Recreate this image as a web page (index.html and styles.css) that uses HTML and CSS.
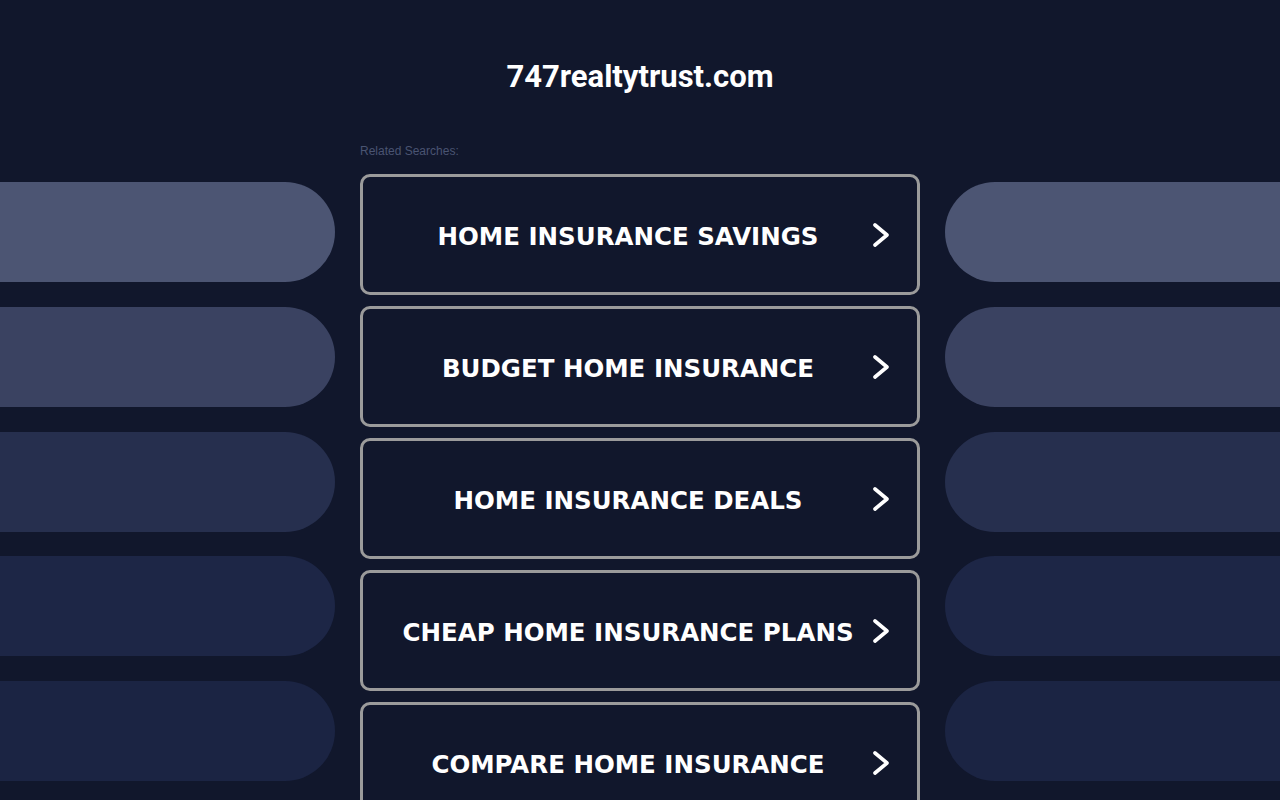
FILE: index.html
```html
<!DOCTYPE html>
<html lang="en">
<head>
<meta charset="utf-8">
<title>747realtytrust.com</title>
<link rel="stylesheet" href="styles.css">
</head>
<body>
  <header class="header">
    <h1 class="domain">747realtytrust.com</h1>
  </header>
  <main class="layout">
    <div class="side side-left">
      <div class="pill pill-1"></div>
      <div class="pill pill-2"></div>
      <div class="pill pill-3"></div>
      <div class="pill pill-4"></div>
      <div class="pill pill-5"></div>
    </div>
    <div class="center">
      <div class="related">Related Searches:</div>
      <ul class="links">
        <li><a class="link" href="#"><span class="link-text">HOME INSURANCE SAVINGS</span><svg class="chev" viewBox="0 0 24 24"><path d="M6 2 L18 12 L6 22"/></svg></a></li>
        <li><a class="link" href="#"><span class="link-text">BUDGET HOME INSURANCE</span><svg class="chev" viewBox="0 0 24 24"><path d="M6 2 L18 12 L6 22"/></svg></a></li>
        <li><a class="link" href="#"><span class="link-text">HOME INSURANCE DEALS</span><svg class="chev" viewBox="0 0 24 24"><path d="M6 2 L18 12 L6 22"/></svg></a></li>
        <li><a class="link" href="#"><span class="link-text">CHEAP HOME INSURANCE PLANS</span><svg class="chev" viewBox="0 0 24 24"><path d="M6 2 L18 12 L6 22"/></svg></a></li>
        <li><a class="link" href="#"><span class="link-text">COMPARE HOME INSURANCE</span><svg class="chev" viewBox="0 0 24 24"><path d="M6 2 L18 12 L6 22"/></svg></a></li>
      </ul>
    </div>
    <div class="side side-right">
      <div class="pill pill-1"></div>
      <div class="pill pill-2"></div>
      <div class="pill pill-3"></div>
      <div class="pill pill-4"></div>
      <div class="pill pill-5"></div>
    </div>
  </main>
</body>
</html>
```

FILE: styles.css
```css
html, body {
  margin: 0;
  padding: 0;
  background: #11172c;
  height: 100%;
  overflow: hidden;
}

body {
  font-family: "Liberation Sans", Arial, sans-serif;
  color: #ffffff;
}

.header {
  height: 140px;
  display: flex;
  justify-content: center;
}

.domain {
  margin: 58px 0 0;
  font-family: Roboto, "Liberation Sans", sans-serif;
  font-weight: 700;
  font-size: 31px;
  line-height: 38px;
  color: #ffffff;
}

.layout {
  display: grid;
  grid-template-columns: 1fr 560px 1fr;
  column-gap: 25px;
}

.side {
  display: flex;
  flex-direction: column;
  gap: 24.75px;
  padding-top: 42px;
}

.pill {
  height: 100px;
  background: #4c5573;
}

.side-left .pill {
  border-radius: 0 50px 50px 0;
}

.side-right .pill {
  border-radius: 50px 0 0 50px;
}

.pill-1 { background: #4c5573; }
.pill-2 { background: #3a4261; }
.pill-3 { background: #262f4e; }
.pill-4 { background: #1d2646; }
.pill-5 { background: #1b2443; }

.center {
  display: flex;
  flex-direction: column;
}

.related {
  font-size: 12px;
  line-height: 20px;
  color: #4a5472;
  height: 34px;
  padding-top: 1px;
  box-sizing: border-box;
}

.links {
  list-style: none;
  margin: 0;
  padding: 0;
  display: flex;
  flex-direction: column;
  gap: 11px;
}

.link {
  display: flex;
  align-items: center;
  height: 121px;
  box-sizing: border-box;
  border: 3px solid #9b9b9b;
  border-radius: 10px;
  background: #11172c;
  text-decoration: none;
  color: #ffffff;
  padding: 0 24px 0 24px;
}

.link-text {
  flex: 1;
  text-align: center;
  font-family: "DejaVu Sans", Verdana, sans-serif;
  font-weight: 700;
  font-size: 24.5px;
  line-height: 30px;
  padding-top: 4px;
  white-space: nowrap;
}

.chev {
  width: 24px;
  height: 24px;
  flex: none;
  fill: none;
  stroke: #ffffff;
  stroke-width: 3.6;
  stroke-linecap: round;
  stroke-linejoin: round;
}
```
